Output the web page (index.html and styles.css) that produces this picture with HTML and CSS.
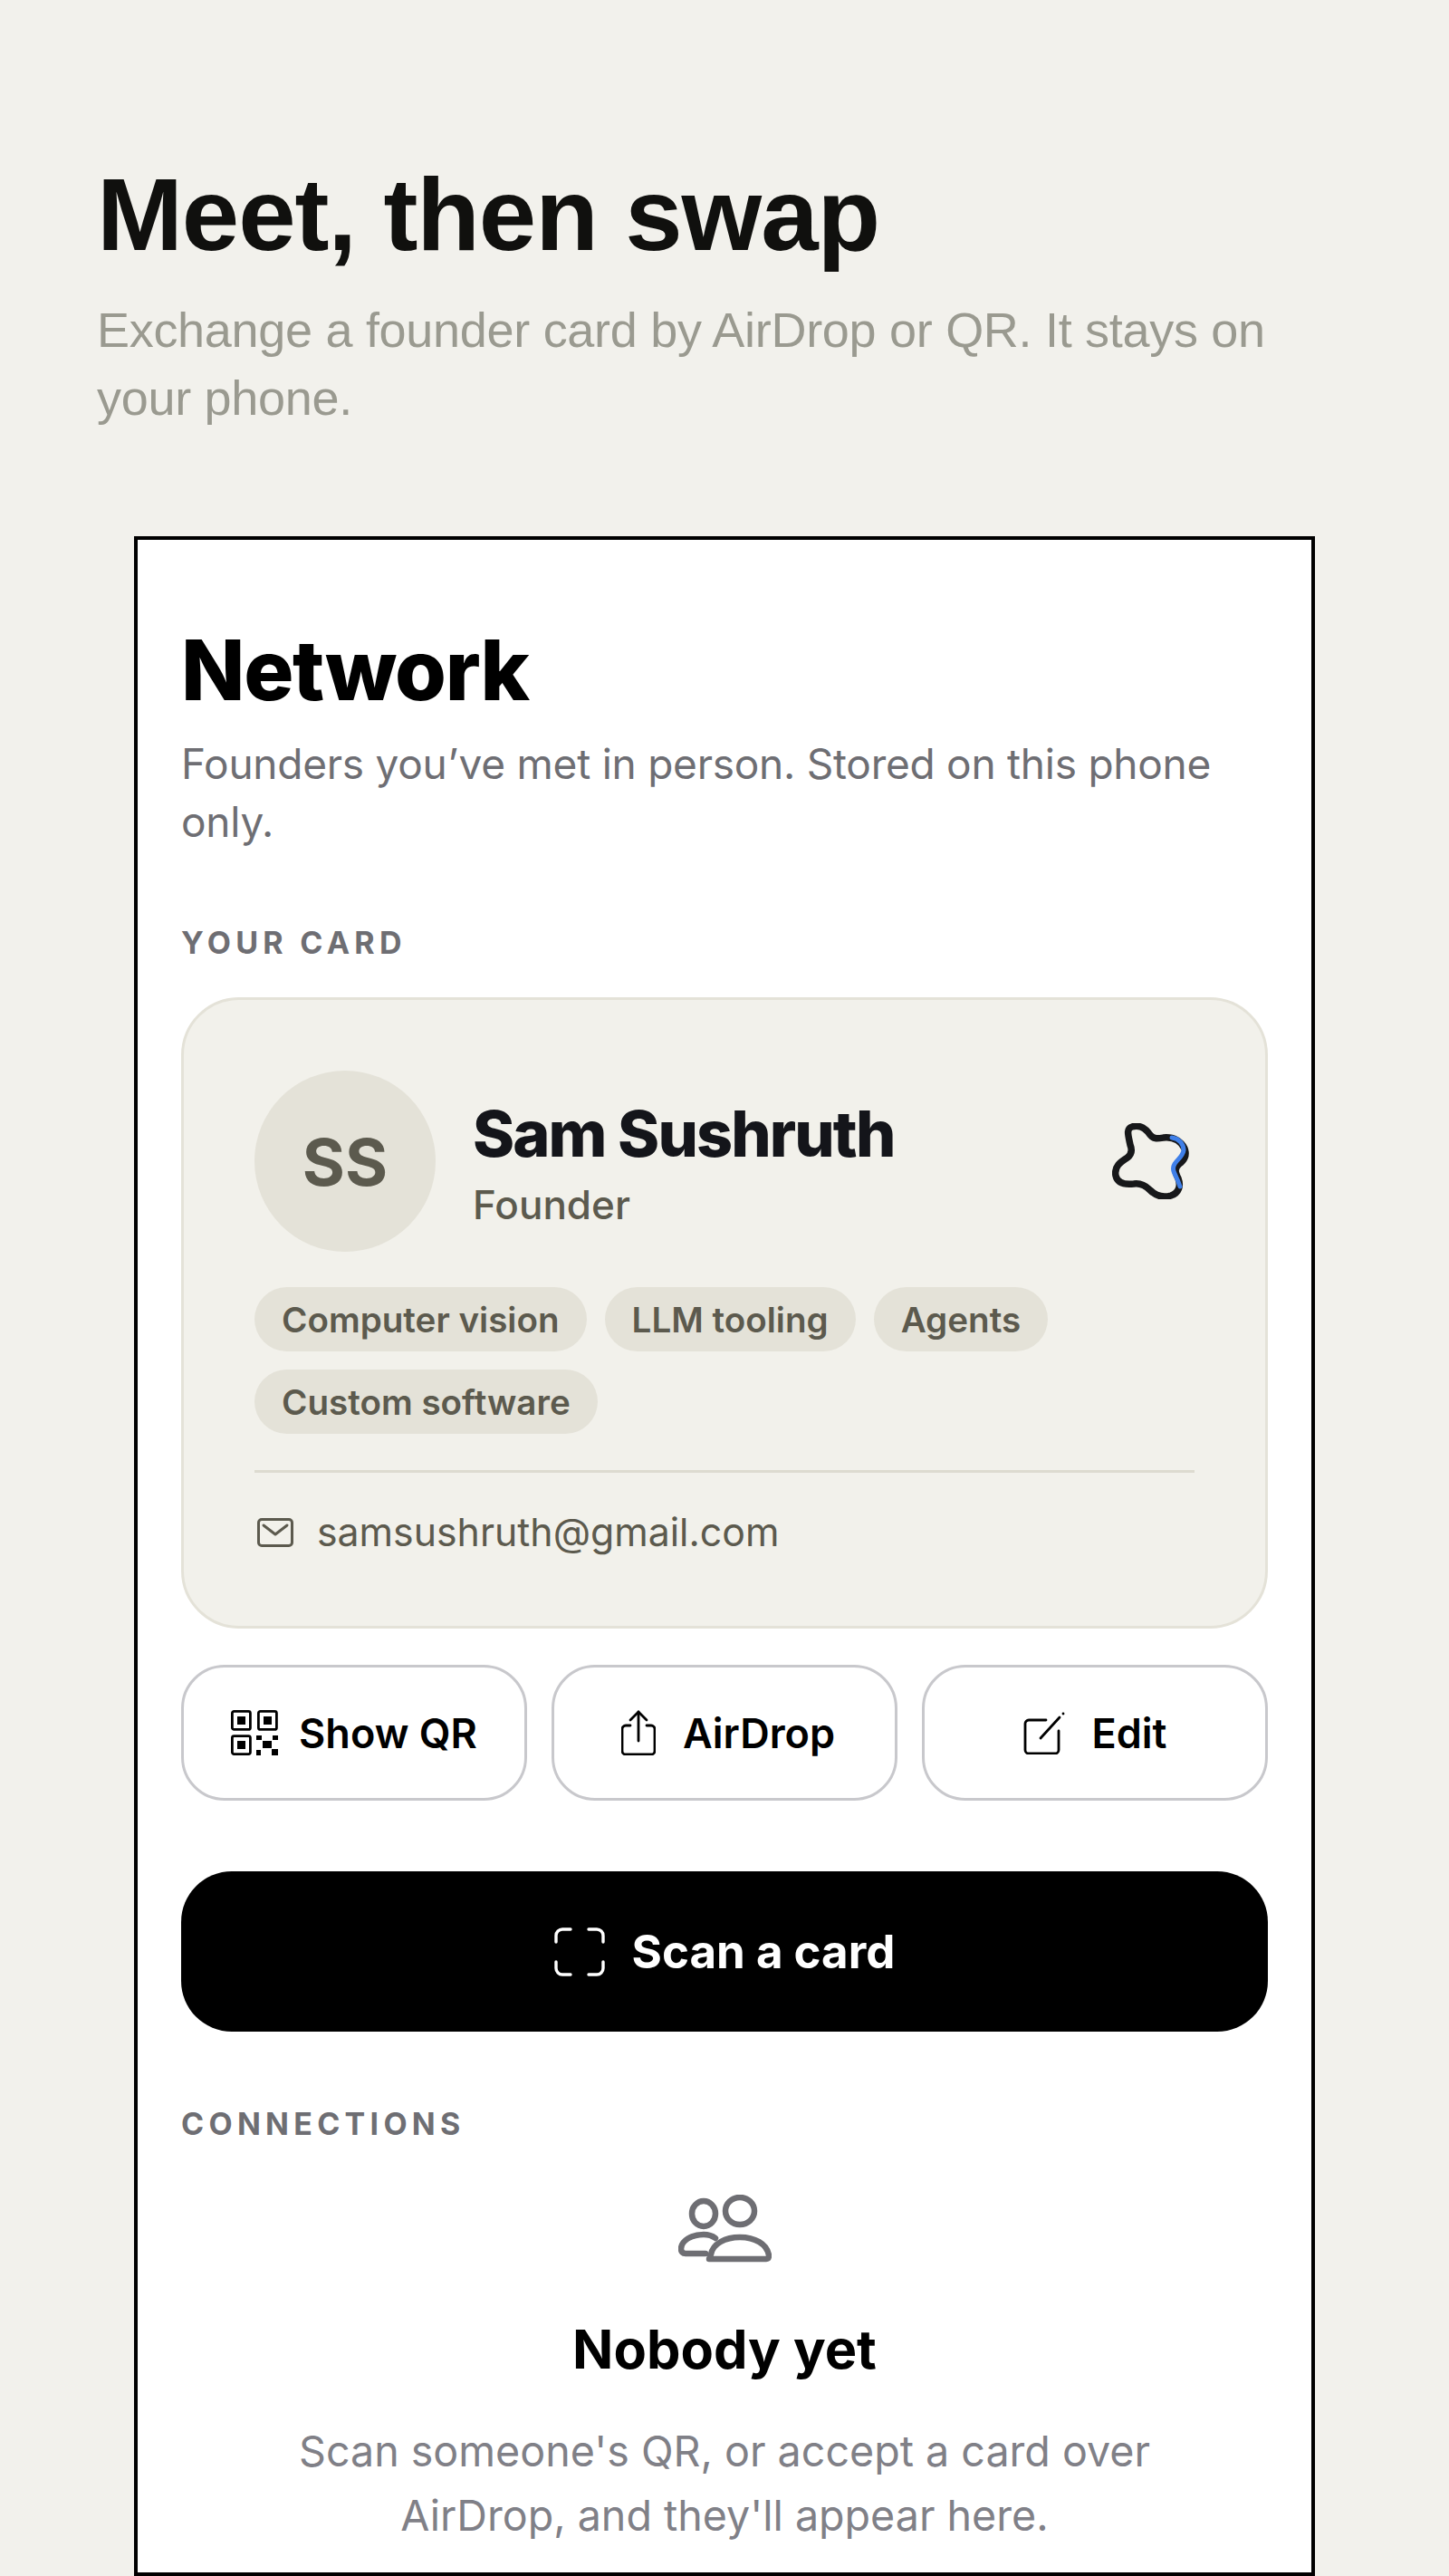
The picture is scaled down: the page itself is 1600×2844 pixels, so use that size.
FILE: index.html
```html
<!DOCTYPE html>
<html lang="en">
<head>
  <meta charset="UTF-8" />
  <meta name="viewport" content="width=device-width, initial-scale=1.0" />
  <title>Meet, then swap</title>
  <link rel="stylesheet" href="styles.css">
</head>
<body>
  <header class="intro">
    <h1>Meet, then swap</h1>
    <p>Exchange a founder card by AirDrop or QR. It stays on your phone.</p>
  </header>

  <main class="frame">
    <h2 class="frame-title">Network</h2>
    <p class="frame-sub">Founders you’ve met in person. Stored on this phone only.</p>

    <div class="label label-card">YOUR CARD</div>
    <section class="card">
      <div class="card-top">
        <div class="avatar">SS</div>
        <div class="who">
          <div class="name">Sam Sushruth</div>
          <div class="role">Founder</div>
        </div>
        <svg class="blob" viewBox="0 0 85 84" fill="none">
          <path d="M22 4C31 1 38 7 42 13C46 18 51 17 57 16C68 15 76 20 80 28C83 36 79 42 74 45C68 50 70 55 73 61C76 69 74 77 65 80C55 83 47 79 42 74C37 69 31 66 24 67C15 68 6 67 4 58C2 48 9 43 17 38C22 34 22 29 20 24C18 14 15 6 22 4Z" stroke="#17181a" stroke-width="7.5"/>
          <path d="M66 16C74 17 79 23 79 30C78 37 72 40 69 45C66 50 68 54 71 60C73 64 74 67 75 70" stroke="#3f7fe8" stroke-width="5" stroke-linecap="round"/>
        </svg>
      </div>
      <div class="chips">
        <span class="chip">Computer vision</span>
        <span class="chip">LLM tooling</span>
        <span class="chip">Agents</span>
        <span class="chip">Custom software</span>
      </div>
      <div class="card-mail">
        <svg class="mail-icon" viewBox="0 0 40 32" fill="none" stroke="currentColor" stroke-width="3" stroke-linecap="round" stroke-linejoin="round">
          <rect x="1.5" y="1.5" width="37" height="29" rx="3.5"/>
          <path d="M7 8l13 10 13-10"/>
        </svg>
        <span>samsushruth@gmail.com</span>
      </div>
    </section>

    <div class="actions">
      <button class="action action-qr">
        <svg class="action-icon icon-qr" viewBox="0 0 52 50" fill="none">
          <g stroke="#000" stroke-width="2.8">
            <rect x="1.4" y="1.4" width="20" height="20" rx="2"/>
            <rect x="30.4" y="1.4" width="20" height="20" rx="2"/>
            <rect x="1.4" y="28.6" width="20" height="20" rx="2"/>
          </g>
          <g fill="#000">
            <rect x="7" y="7" width="9" height="9"/>
            <rect x="36" y="7" width="9" height="9"/>
            <rect x="7" y="34" width="9" height="9"/>
            <rect x="28" y="28" width="6" height="5"/>
            <rect x="46" y="28" width="6" height="5"/>
            <rect x="35" y="34" width="10" height="8"/>
            <rect x="28" y="44" width="5" height="6"/>
            <rect x="45" y="43" width="7" height="7"/>
          </g>
        </svg>
        Show QR
      </button>
      <button class="action action-drop">
        <svg class="action-icon icon-share" viewBox="0 0 38 50" fill="none" stroke="#000" stroke-width="2.8" stroke-linecap="round" stroke-linejoin="round">
          <path d="M10 17H5a4 4 0 0 0-4 4v24a4 4 0 0 0 4 4h28a4 4 0 0 0 4-4V21a4 4 0 0 0-4-4h-5"/>
          <path d="M19 34V2"/>
          <path d="M10 11l9-9 9 9"/>
        </svg>
        AirDrop
      </button>
      <button class="action">
        <svg class="action-icon icon-edit" viewBox="0 0 46 47" fill="none" stroke="#000" stroke-width="2.8" stroke-linecap="round" stroke-linejoin="round">
          <path d="M25 9H6a4 4 0 0 0-4 4v29a4 4 0 0 0 4 4h29a4 4 0 0 0 4-4V21"/>
          <path d="M19 29L40 6"/>
          <path d="M44 2h.01"/>
        </svg>
        Edit
      </button>
    </div>

    <button class="scan">
      <svg class="scan-icon" viewBox="0 0 56 54" fill="none" stroke="#fff" stroke-width="3.4" stroke-linecap="round" stroke-linejoin="round">
        <path d="M2 16V9a7 7 0 0 1 7-7h9"/>
        <path d="M38 2h9a7 7 0 0 1 7 7v7"/>
        <path d="M54 38v7a7 7 0 0 1-7 7h-9"/>
        <path d="M18 52H9a7 7 0 0 1-7-7v-7"/>
      </svg>
      Scan a card
    </button>

    <div class="label label-conn">CONNECTIONS</div>
    <section class="empty">
      <svg class="people" viewBox="0 0 103 75" fill="none" stroke="#6e6e73" stroke-width="6.5" stroke-linecap="round" stroke-linejoin="round">
        <ellipse cx="28" cy="21" rx="13" ry="14"/>
        <ellipse cx="68" cy="18" rx="16" ry="15"/>
        <path d="M41 48C37 45 32 44 28 44C14 44 3 51 3 60C3 63 5 65 8 65H30"/>
        <path d="M34 71H97C99 71 100 70 100 67C98 54 84 47 68 47C52 47 38 54 36 66C35 69 33 71 36 71Z"/>
      </svg>
      <h3>Nobody yet</h3>
      <p>Scan someone's QR, or accept a card over AirDrop, and they'll appear here.</p>
    </section>
  </main>
</body>
</html>
```

FILE: styles.css
```css
* { margin: 0; padding: 0; box-sizing: border-box; }
html, body { width: 100%; height: 100%; }
body {
  height: 2844px;
  overflow: hidden;
  display: flex;
  flex-direction: column;
  background: #f2f1ec;
  font-family: "Inter", "Liberation Sans", sans-serif;
  padding-top: 178px;
}

/* top heading */
.intro { padding: 0 107px; }
.intro h1 {
  font-family: "Liberation Sans", sans-serif;
  font-size: 114px;
  line-height: 118px;
  font-weight: 700;
  letter-spacing: -1.1px;
  color: #10100e;
}
.intro p {
  margin-top: 31px;
  font-family: "Liberation Sans", sans-serif;
  font-size: 54px;
  line-height: 75px;
  letter-spacing: -0.3px;
  color: #9a9a90;
}

/* phone frame */
.frame {
  flex: 1;
  margin: 115px 148px 0;
  overflow: hidden;
  background: #fff;
  border: 4px solid #000;
  padding: 94px 48px 0;
}
.frame-title {
  font-size: 92px;
  line-height: 100px;
  font-weight: 800;
  letter-spacing: -0.014em;
  color: #000;
}
.frame-sub {
  margin-top: 21px;
  font-size: 46px;
  line-height: 64px;
  letter-spacing: -0.25px;
  color: #6e6e73;
}

.label {
  font-size: 34px;
  line-height: 40px;
  font-weight: 700;
  letter-spacing: 0.155em;
  color: #6e6e73;
}
.label-card { margin-top: 82px; }
.label-conn { margin-top: 82px; }

/* founder card */
.card {
  margin-top: 40px;
  height: 697px;
  padding: 78px 78px 0;
  background: #f2f1eb;
  border: 3px solid #e4e2d8;
  border-radius: 64px;
}
.card-top { display: flex; align-items: center; }
.avatar {
  width: 200px; height: 200px;
  flex: none;
  display: flex; align-items: center; justify-content: center;
  border-radius: 50%;
  background: #e4e2d8;
  color: #5c5a4e;
  font-size: 72px;
  font-weight: 700;
}
.who { flex: 1; margin-left: 41px; padding-top: 5px; }
.name {
  font-size: 70px;
  line-height: 80px;
  font-weight: 800;
  letter-spacing: -0.027em;
  color: #14151a;
}
.role {
  margin-top: 11px;
  font-size: 44px;
  line-height: 54px;
  font-weight: 500;
  color: #5c5a4e;
}
.blob { width: 85px; height: 84px; flex: none; margin-right: 6px; }

.chips { display: flex; flex-wrap: wrap; gap: 20px; margin-top: 39px; }
.chip {
  height: 71px;
  padding: 0 30px;
  display: flex; align-items: center;
  border-radius: 36px;
  background: #e4e2d8;
  color: #5c5a4e;
  font-size: 38.6px;
  font-weight: 600;
}
.card-mail {
  margin-top: 40px;
  padding-top: 39px;
  border-top: 3px solid #dddbd0;
  display: flex; align-items: center; gap: 26px;
  color: #5c5a4e;
  font-size: 42.8px;
  line-height: 54px;
}
.mail-icon { width: 40px; height: 32px; margin-left: 3px; }

/* buttons */
.actions {
  margin-top: 40px;
  display: grid;
  grid-template-columns: repeat(3, 1fr);
  gap: 27px;
}
.action {
  height: 150px;
  display: flex; align-items: center; justify-content: center; gap: 30px;
  background: #fff;
  border: 3px solid #c8c8cc;
  border-radius: 48px;
  color: #000;
  font-family: inherit;
  font-size: 45px;
  font-weight: 600;
}
.action-qr { gap: 23px; }
.action-drop { padding-left: 8px; }
.action-icon { flex: none; }
.icon-qr { width: 52px; height: 50px; }
.icon-share { width: 38px; height: 50px; }
.icon-edit { width: 46px; height: 47px; }
.scan {
  margin-top: 78px;
  width: 100%;
  height: 177px;
  display: flex; align-items: center; justify-content: center; gap: 30px;
  background: #000;
  border: none;
  border-radius: 56px;
  color: #fff;
  font-family: inherit;
  font-size: 51px;
  font-weight: 700;
}
.scan-icon { width: 56px; height: 54px; }

/* empty state */
.empty { display: flex; flex-direction: column; align-items: center; text-align: center; }
.people { width: 103px; height: 75px; margin-top: 58px; }
.empty h3 {
  margin-top: 60px;
  font-size: 59.5px;
  line-height: 70px;
  font-weight: 700;
  color: #000;
}
.empty p {
  margin-top: 43px;
  width: 1000px;
  font-size: 46.6px;
  line-height: 71px;
  color: #808087;
}
```
